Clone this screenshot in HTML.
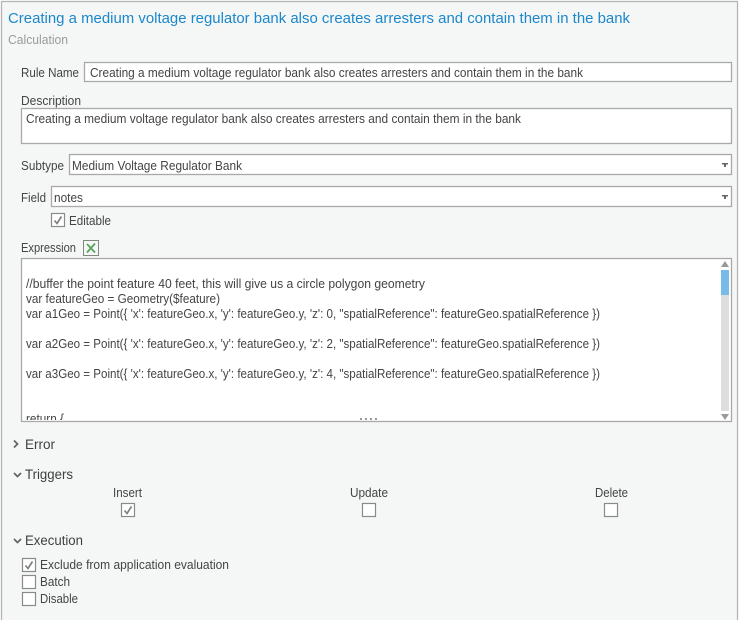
<!DOCTYPE html>
<html>
<head>
<meta charset="utf-8">
<style>
html,body{margin:0;padding:0;background:#fff;width:742px;height:620px;overflow:hidden}
svg{display:block}
text{font-family:"Liberation Sans",sans-serif;font-size:12.5px;fill:#444}
.b{fill:#fff;stroke:#a9a9a9;stroke-width:1.3}
.c{fill:#fff;stroke:#8a8a8a;stroke-width:1.2}
.k{fill:none;stroke:#808080;stroke-width:1.7}
.h{font-size:13.5px;fill:#3f3f3f}
.m{fill:none;stroke:#666;stroke-width:1.800}
</style>
</head>
<body>
<svg width="742" height="620" viewBox="0 0 742 620" xmlns="http://www.w3.org/2000/svg">
<rect x="0" y="0" width="742" height="620" fill="#fff"/>
<rect x="1.500" y="1.500" width="736" height="630" fill="#f5f7f7" stroke="#b4b4b4" stroke-width="1.300"/>

<text x="8" y="23" textLength="622" lengthAdjust="spacingAndGlyphs" style="font-size:15px;fill:#1b87cc">Creating a medium voltage regulator bank also creates arresters and contain them in the bank</text>
<text x="8" y="44" textLength="60" lengthAdjust="spacingAndGlyphs" style="fill:#9a9a9a">Calculation</text>

<text x="21" y="77" textLength="58" lengthAdjust="spacingAndGlyphs">Rule Name</text>
<rect class="b" x="84.500" y="62.500" width="647" height="19"/>
<text x="90" y="77" textLength="493" lengthAdjust="spacingAndGlyphs">Creating a medium voltage regulator bank also creates arresters and contain them in the bank</text>

<text x="21" y="105" textLength="60" lengthAdjust="spacingAndGlyphs">Description</text>
<rect class="b" x="21.500" y="108.500" width="710" height="35"/>
<text x="26" y="123" textLength="495" lengthAdjust="spacingAndGlyphs">Creating a medium voltage regulator bank also creates arresters and contain them in the bank</text>

<text x="21" y="170" textLength="43" lengthAdjust="spacingAndGlyphs">Subtype</text>
<rect class="b" x="69.500" y="154.500" width="662" height="20"/>
<text x="72" y="170" textLength="170" lengthAdjust="spacingAndGlyphs">Medium Voltage Regulator Bank</text>
<path d="M722 163h6v1.500h-2v2.500h-2v-2.500h-2z" fill="#666"/>

<text x="21" y="202" textLength="25" lengthAdjust="spacingAndGlyphs">Field</text>
<rect class="b" x="51.500" y="186.500" width="680" height="20"/>
<text x="54" y="202" textLength="29" lengthAdjust="spacingAndGlyphs">notes</text>
<path d="M722 195h6v1.500h-2v2.500h-2v-2.500h-2z" fill="#666"/>

<rect class="c" x="51.500" y="213.500" width="13" height="13"/>
<path class="k" d="M54.500 220.500l2.500 3 4.500-7"/>
<text x="69" y="225" textLength="42" lengthAdjust="spacingAndGlyphs">Editable</text>

<text x="21" y="252" textLength="55" lengthAdjust="spacingAndGlyphs">Expression</text>
<rect x="83.500" y="240.500" width="15" height="15" fill="#f5f7f7" stroke="#7d8a7d"/>
<path d="M87 244l8 8.500M95 243.500l-8 9" fill="none" stroke="#5aa35a" stroke-width="1.800"/>

<rect class="b" x="21.500" y="258.500" width="710" height="163"/>
<text x="26" y="288" textLength="399" lengthAdjust="spacingAndGlyphs">//buffer the point feature 40 feet, this will give us a circle polygon geometry</text>
<text x="26" y="303" textLength="194" lengthAdjust="spacingAndGlyphs">var featureGeo = Geometry($feature)</text>
<text x="26" y="318" textLength="574" lengthAdjust="spacingAndGlyphs">var a1Geo = Point({ 'x': featureGeo.x, 'y': featureGeo.y, 'z': 0, "spatialReference": featureGeo.spatialReference })</text>
<text x="26" y="348" textLength="574" lengthAdjust="spacingAndGlyphs">var a2Geo = Point({ 'x': featureGeo.x, 'y': featureGeo.y, 'z': 2, "spatialReference": featureGeo.spatialReference })</text>
<text x="26" y="378" textLength="574" lengthAdjust="spacingAndGlyphs">var a3Geo = Point({ 'x': featureGeo.x, 'y': featureGeo.y, 'z': 4, "spatialReference": featureGeo.spatialReference })</text>
<clipPath id="e"><rect x="22" y="259" width="698" height="161"/></clipPath>
<text x="26" y="423" textLength="38" lengthAdjust="spacingAndGlyphs" clip-path="url(#e)">return {</text>
<path d="M360 419h2M365 419h2M370 419h2M375 419h2" stroke="#999" stroke-width="2" fill="none"/>
<rect x="721" y="270" width="8" height="141" fill="#dedede"/>
<rect x="721" y="270" width="8" height="25" fill="#77bce8"/>
<path d="M721 267l4-6 4 6z" fill="#999"/>
<path d="M721 414h8l-4 6z" fill="#999"/>

<path class="m" d="M14 440.500l3.500 3.500-3.500 3.500"/>
<text class="h" x="25" y="449" textLength="30" lengthAdjust="spacingAndGlyphs">Error</text>
<path class="m" d="M14 473l3.500 3.500 3.500-3.500"/>
<text class="h" x="25" y="479" textLength="48" lengthAdjust="spacingAndGlyphs">Triggers</text>

<text x="113" y="497" textLength="29" lengthAdjust="spacingAndGlyphs">Insert</text>
<rect class="c" x="121.500" y="503.500" width="13" height="13"/>
<path class="k" d="M124.500 510.500l2.500 3 4.500-7"/>
<text x="350" y="497" textLength="38" lengthAdjust="spacingAndGlyphs">Update</text>
<rect class="c" x="362.500" y="503.500" width="13" height="13"/>
<text x="595" y="497" textLength="33" lengthAdjust="spacingAndGlyphs">Delete</text>
<rect class="c" x="604.500" y="503.500" width="13" height="13"/>

<path class="m" d="M14 539l3.500 3.500 3.500-3.500"/>
<text class="h" x="25" y="545" textLength="58" lengthAdjust="spacingAndGlyphs">Execution</text>

<rect class="c" x="22.500" y="558.500" width="13" height="13"/>
<path class="k" d="M25.500 565.500l2.500 3 4.500-7"/>
<text x="40" y="569" textLength="189" lengthAdjust="spacingAndGlyphs">Exclude from application evaluation</text>
<rect class="c" x="22.500" y="575.500" width="13" height="13"/>
<text x="40" y="586" textLength="30" lengthAdjust="spacingAndGlyphs">Batch</text>
<rect class="c" x="22.500" y="592.500" width="13" height="13"/>
<text x="40" y="603" textLength="38" lengthAdjust="spacingAndGlyphs">Disable</text>
</svg>
</body>
</html>
